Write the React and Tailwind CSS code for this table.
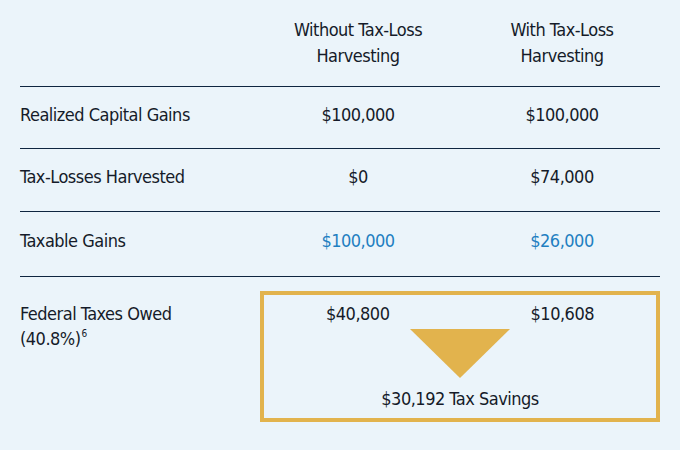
import React from "react";

const rows = [
  { label: "Realized Capital Gains", a: "$100,000", b: "$100,000", h: "h-[62px]" },
  { label: "Tax-Losses Harvested", a: "$0", b: "$74,000", h: "h-[63px]" },
  { label: "Taxable Gains", a: "$100,000", b: "$26,000", h: "h-[65px]", blue: true },
];

export default function App() {
  return (
    <div className="w-[680px] h-[450px] overflow-hidden bg-[#ebf4fa] px-[20px] text-[#151b29] text-[18px] leading-[26px] tracking-[-0.5px] font-['DejaVu_Sans_Condensed','Liberation_Sans_Narrow','Liberation_Sans',sans-serif] [font-stretch:condensed]">
      {/* header */}
      <div className="grid grid-cols-[236px_204px_204px] pt-[17px] pb-[17px]">
        <div></div>
        <div className="text-center">
          Without Tax-Loss
          <br />
          Harvesting
        </div>
        <div className="text-center">
          With Tax-Loss
          <br />
          Harvesting
        </div>
      </div>

      {rows.map((r) => (
        <div
          key={r.label}
          className={`grid grid-cols-[236px_204px_204px] items-center border-t border-[#0f2540] pb-[6px] ${r.h}`}
        >
          <div>{r.label}</div>
          <div className={`text-center ${r.blue ? "text-[#1f7fc1]" : ""}`}>{r.a}</div>
          <div className={`text-center ${r.blue ? "text-[#1f7fc1]" : ""}`}>{r.b}</div>
        </div>
      ))}

      {/* federal taxes row */}
      <div className="grid grid-cols-[240px_400px] border-t border-[#0f2540] pt-[14px]">
        <div className="pt-[10px] leading-[25px]">
          <div>Federal Taxes Owed</div>
          <div>
            (40.8%)<span className="text-[10px] leading-none relative top-[-8px] ml-[1px]">6</span>
          </div>
        </div>
        <div className="h-[131px] border-[4px] border-[#e2b34d] pt-[6px] flex flex-col items-center">
          <div className="flex justify-between w-full px-[62px] leading-[25px]">
            <div>$40,800</div>
            <div>$10,608</div>
          </div>
          <svg width="100" height="49" viewBox="0 0 100 49" className="mt-[3px]">
            <polygon points="0,0 100,0 50,49" fill="#e2b34d" />
          </svg>
          <div className="mt-[8px] leading-[25px]">$30,192 Tax Savings</div>
        </div>
      </div>
    </div>
  );
}
